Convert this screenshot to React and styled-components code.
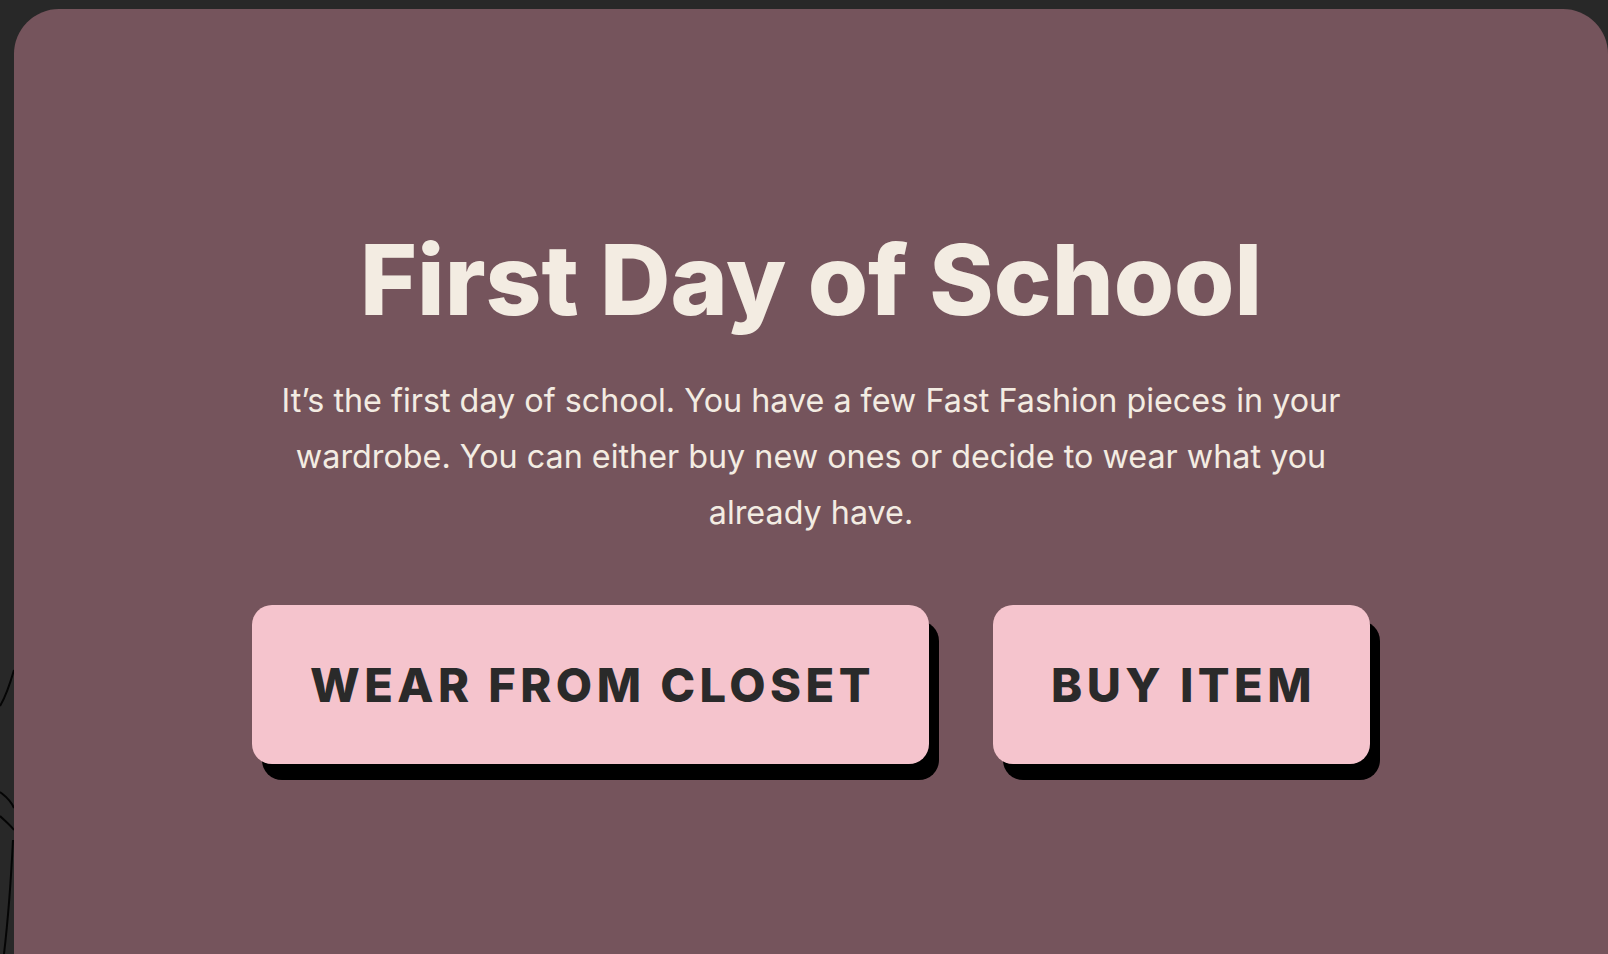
import React from "react";
import styled, { createGlobalStyle } from "styled-components";

const GlobalStyle = createGlobalStyle`
  html, body {
    margin: 0;
    padding: 0;
    background: #282828;
    overflow: hidden;
  }
  body {
    font-family: "Inter", "Liberation Sans", sans-serif;
  }
`;

const choices = [
  { id: "closet", label: "Wear from Closet" },
  { id: "buy", label: "Buy Item" },
];

const App = () => {
  return (
    <>
      <GlobalStyle />
      <Page>
        <Doodle viewBox="0 0 60 354" width="60" height="354">
          <path d="M14 70 C 10 84, 6 96, 0 106" />
          <path d="M0 192 C 5 196, 10 199, 14 208" />
          <path d="M0 216 C 5 221, 10 225, 14 230" />
          <path d="M13 240 C 11 280, 8 320, 4 354" />
        </Doodle>
        <Panel>
          <Title>First Day of School</Title>
          <Text>
            It’s the first day of school. You have a few Fast Fashion pieces in
            your wardrobe. You can either buy new ones or decide to wear what
            you already have.
          </Text>
          <Actions>
            {choices.map(({ id, label }) => (
              <Button key={id}>{label}</Button>
            ))}
          </Actions>
        </Panel>
      </Page>
    </>
  );
};
export default App;

const Page = styled.div`
  position: relative;
  width: 100%;
  height: 954px;
  padding: 9px 0 0 14px;
  box-sizing: border-box;
  display: flex;
`;

const Doodle = styled.svg`
  position: absolute;
  left: 0;
  top: 600px;
  fill: none;
  stroke: #050505;
  stroke-width: 2;
`;

const Panel = styled.div`
  position: relative;
  z-index: 1;
  flex: 1;
  min-height: 945px;
  background: #75545c;
  border-radius: 45px 45px 0 0;
  display: flex;
  flex-direction: column;
  align-items: center;
  padding-top: 216px;
  box-sizing: border-box;
`;

const Title = styled.h1`
  margin: 0;
  font-size: 97.5px;
  font-weight: 800;
  line-height: 1.13;
  letter-spacing: 0;
  color: #f3ece2;
`;

const Text = styled.p`
  margin: 38px 0 0;
  max-width: 1090px;
  text-align: center;
  font-size: 32.3px;
  line-height: 56px;
  color: #f3ece2;
`;

const Actions = styled.div`
  display: flex;
  gap: 64px;
  margin-top: 64px;
`;

const Button = styled.button`
  height: 159px;
  padding: 0 54px 0 58px;
  border: none;
  border-radius: 20px;
  background: #f5c4cd;
  box-shadow: 10px 16px 0 #000;
  font-family: "Inter", "Liberation Sans", sans-serif;
  font-size: 47px;
  font-weight: 800;
  letter-spacing: 0.095em;
  text-transform: uppercase;
  color: #2a2a2a;
  cursor: pointer;
`;
